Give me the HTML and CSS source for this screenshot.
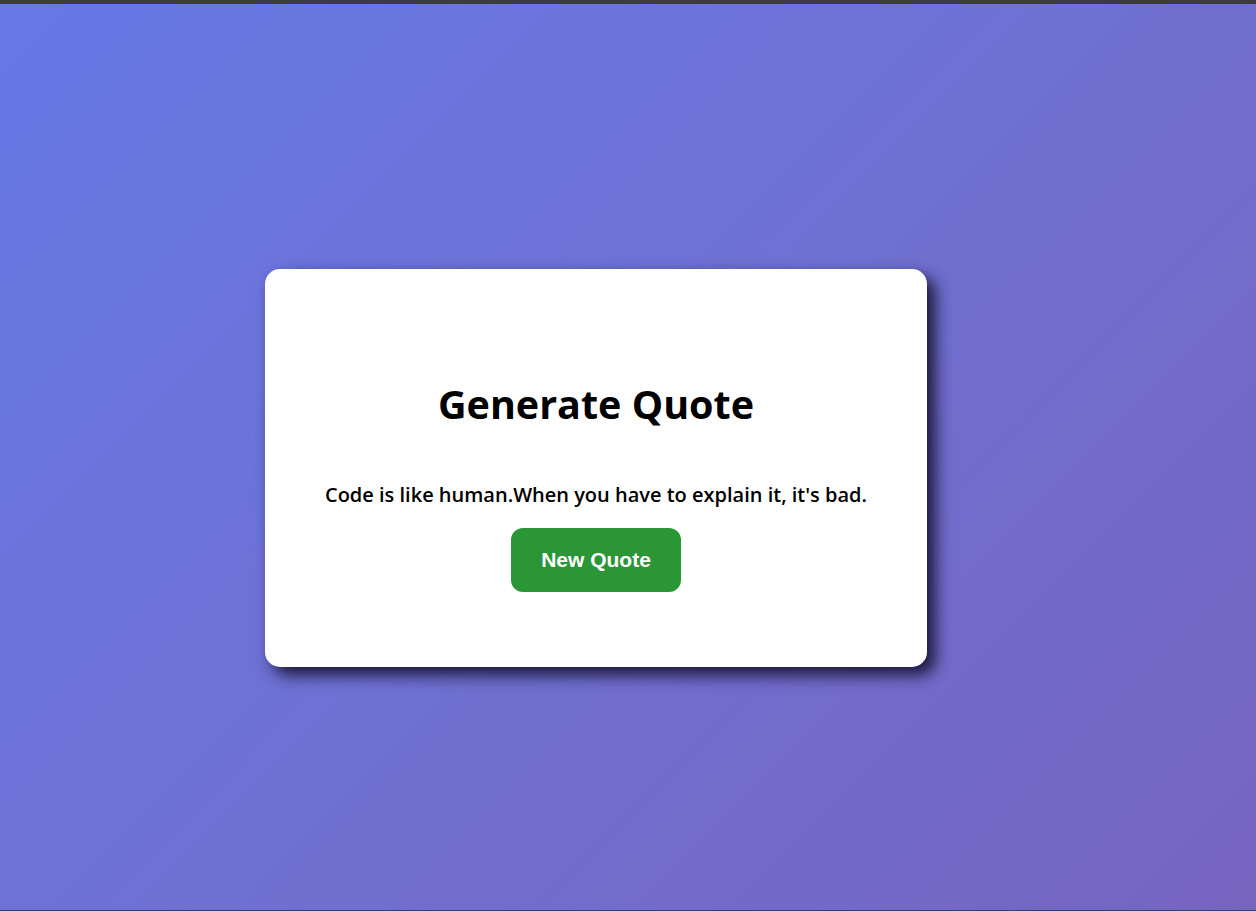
FILE: index.html
```html
<!DOCTYPE html>
<html lang="en">
<head>
<meta charset="utf-8">
<title>Generate Quote</title>
<link rel="stylesheet" href="styles.css">
</head>
<body>
<div class="topbar"></div>
<main class="stage">
  <section class="card">
    <h1 class="title">Generate Quote</h1>
    <p class="quote">Code is like human.When you have to explain it, it's bad.</p>
    <button class="btn" type="button">New Quote</button>
  </section>
</main>
<div class="bottomline"></div>
</body>
</html>
```
FILE: styles.css
```css
html, body {
  margin: 0;
  padding: 0;
  height: 100%;
}
body {
  display: flex;
  flex-direction: column;
  background: linear-gradient(135deg, #6679e6 0%, #6f70d2 50%, #7665bf 100%);
  font-family: "Open Sans", "Noto Sans", sans-serif;
  overflow: hidden;
}
.topbar {
  height: 4px;
  background: #3c3c3c;
  flex: none;
}
.bottomline {
  height: 1px;
  background: #3b3f5e;
  flex: none;
}
.stage {
  flex: 1;
  display: flex;
  align-items: center;
  justify-content: center;
  padding: 22px 64px 0 0;
}
.card {
  width: 662px;
  height: 398px;
  box-sizing: border-box;
  background: #fff;
  border-radius: 15px;
  box-shadow: 8px 8px 16px rgba(15, 12, 40, 0.9);
  padding: 108px 40px 75px;
  display: flex;
  flex-direction: column;
  align-items: center;
}
.title {
  margin: 0;
  font-size: 39.5px;
  line-height: 54px;
  font-weight: 700;
  color: #000;
}
.quote {
  margin: 50px 0 0;
  font-size: 20px;
  line-height: 28px;
  font-weight: 600;
  color: #000;
}
.btn {
  margin-top: 19px;
  width: 170px;
  height: 64px;
  flex: none;
  border: none;
  border-radius: 12px;
  background: #2b9636;
  color: #fff;
  font-family: "Liberation Sans", Arial, sans-serif;
  font-weight: 700;
  font-size: 21px;
  cursor: pointer;
}
```
